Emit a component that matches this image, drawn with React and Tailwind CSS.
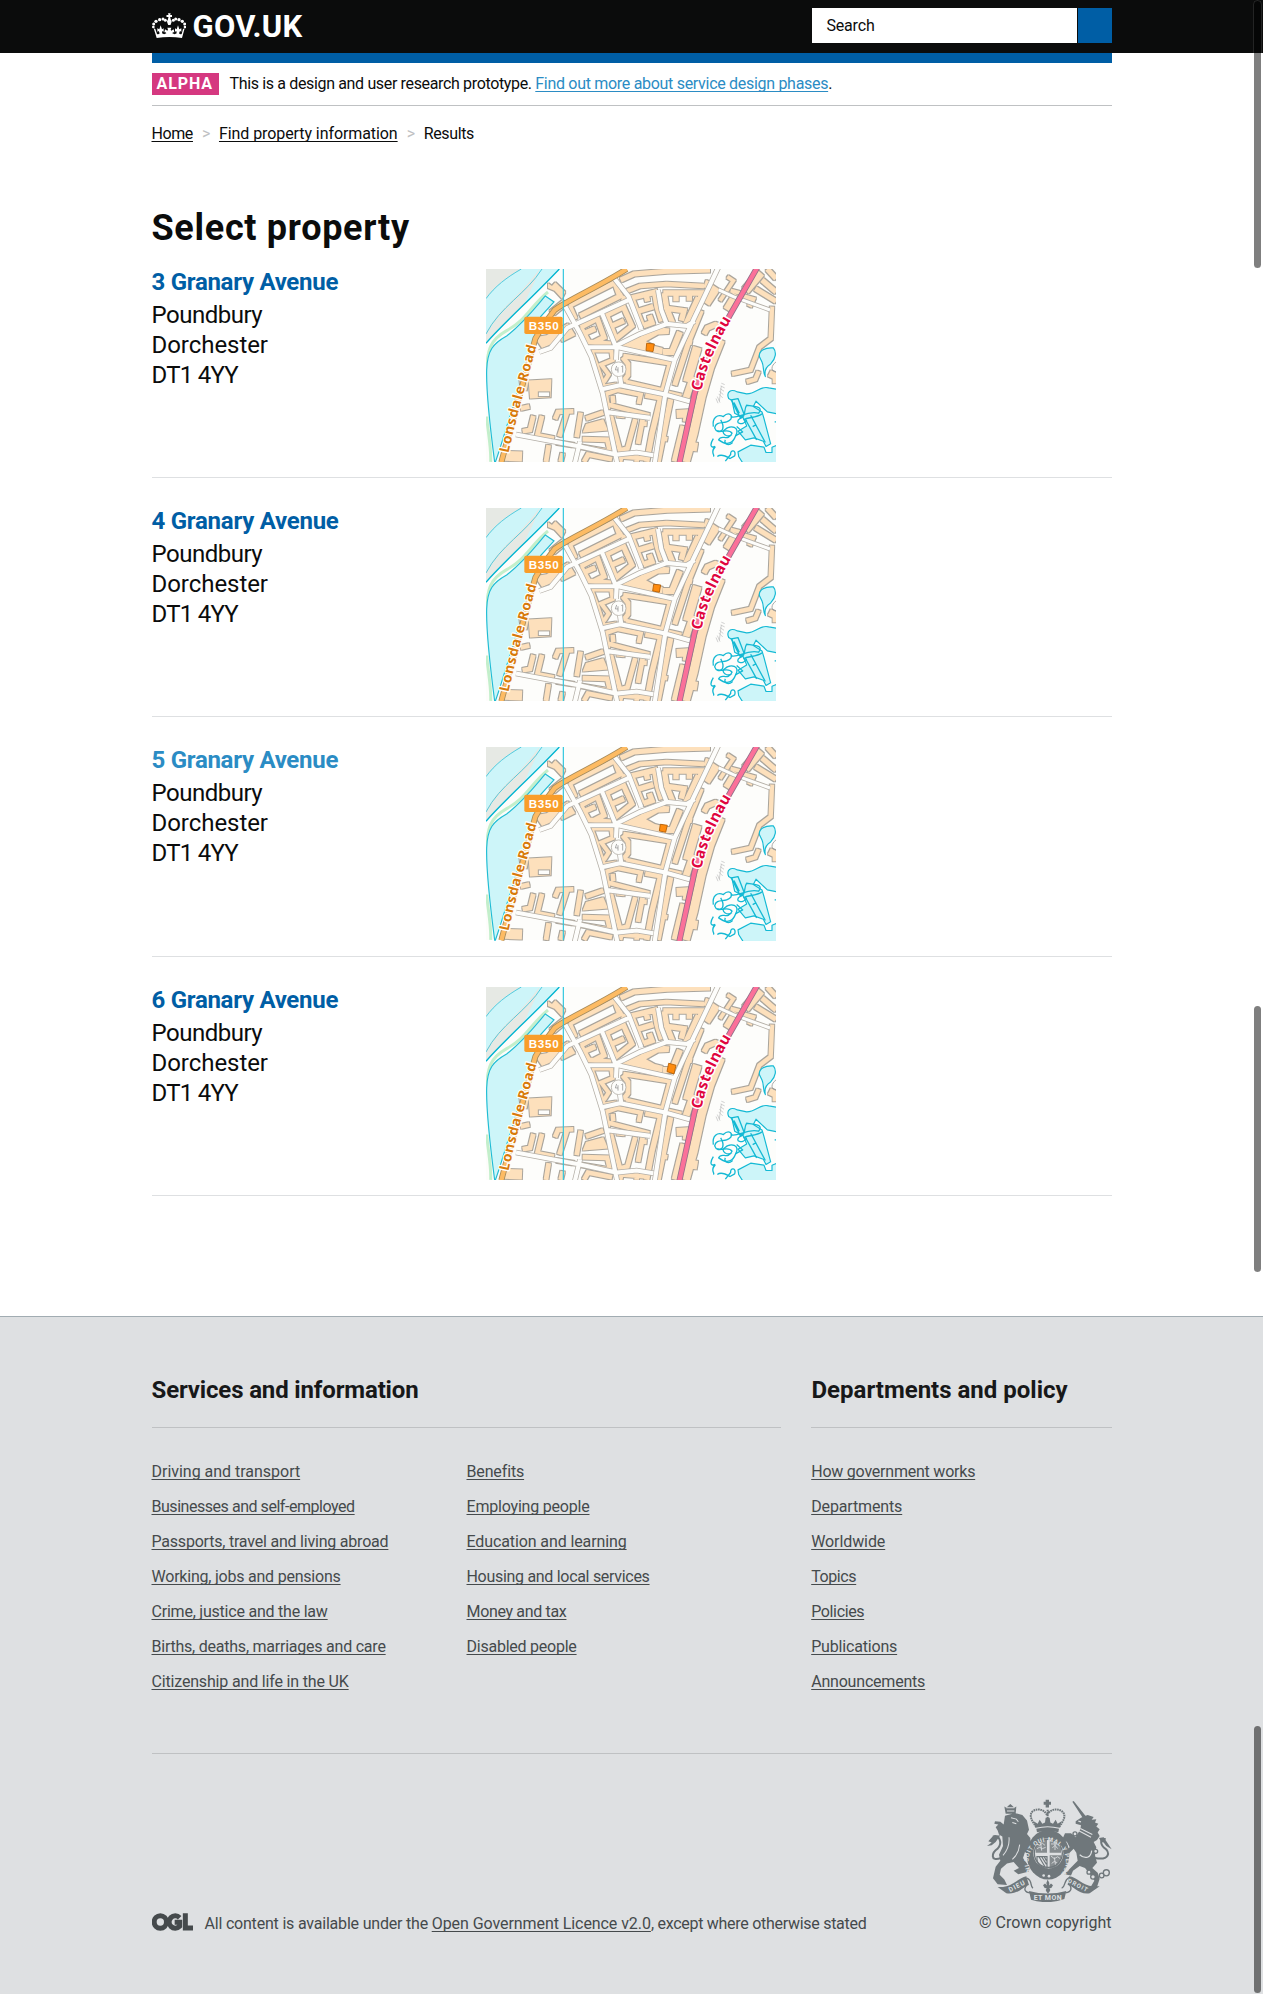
const ROBOTO = "font-['Roboto','Liberation_Sans',sans-serif]";

const properties = [
  { n: "3", marker: "M500 250 L523 252 L519 275 L498 272Z", tone: "text-[#005ea5]", track: "tracking-[-0.28px]" },
  { n: "4", marker: "M521 256 L542 258 L538 280 L518 276Z", tone: "text-[#005ea5]", track: "tracking-[-0.25px]" },
  { n: "5", marker: "M541 259 L562 262 L557 283 L538 279Z", tone: "text-[#2b8cc4]", track: "tracking-[-0.28px]" },
  { n: "6", marker: "M566 256 L588 262 L582 288 L561 281Z", tone: "text-[#005ea5]", track: "tracking-[-0.28px]" },
];

const servicesA = [
  ["Driving and transport", "tracking-[-0.02px]"],
  ["Businesses and self-employed", "tracking-[-0.46px]"],
  ["Passports, travel and living abroad", "tracking-[-0.21px]"],
  ["Working, jobs and pensions", "tracking-[-0.22px]"],
  ["Crime, justice and the law", "tracking-[-0.22px]"],
  ["Births, deaths, marriages and care", "tracking-[-0.23px]"],
  ["Citizenship and life in the UK", "tracking-[-0.17px]"],
];
const servicesB = [
  ["Benefits", "tracking-[-0.14px]"],
  ["Employing people", "tracking-[-0.2px]"],
  ["Education and learning", "tracking-[-0.11px]"],
  ["Housing and local services", "tracking-[-0.3px]"],
  ["Money and tax", "tracking-[-0.33px]"],
  ["Disabled people", "tracking-[-0.24px]"],
];
const departments = [
  ["How government works", "tracking-[-0.22px]"],
  ["Departments", "tracking-[-0.14px]"],
  ["Worldwide", "tracking-[-0.09px]"],
  ["Topics", "tracking-[-0.4px]"],
  ["Policies", "tracking-[-0.36px]"],
  ["Publications", "tracking-[-0.18px]"],
  ["Announcements", "tracking-[-0.2px]"],
];

const underline = "underline decoration-1 underline-offset-[2px] [text-decoration-skip-ink:none]";

/* Land parcels: [stroke width, path] */
const strips = [
  [15, "M268 136 L286 178 M268 137 L404 68 L418 106 M300 168 L428 104"],
  [15, "M422 60 L462 42 L560 34 L690 30 M540 34 V40"],
  [13, "M440 94 L480 78 L560 72 L672 78 M684 62 L676 84"],
  [16, "M488 198 L455 114 L524 97 L531 140 L545 184 M474 154 L520 140 M490 197 L516 188 L508 166 M498 104 L503 124"],
  [16, "M550 99 L665 99 L655 140 M588 99 V124 M628 99 V122 M553 99 L560 145 L578 190 M566 146 L612 152 L604 182 M655 112 L616 196"],
  [15, "M434 108 L428 136 L456 198 L408 236 L380 166 L424 144 M396 198 L432 182 M428 136 L442 168"],
  [15, "M302 202 L352 176 L372 232 L344 246 M302 202 L326 246 L394 252 M318 218 L346 206"],
  [18, "M548 276 L576 276 L600 216"],
  [14, "M430 288 L570 310 L548 392 L438 366 M428 292 L444 312 L444 346 L430 364"],
  [12, "M336 272 L394 272 L398 300 L364 314 L386 344 L372 366 M334 272 L352 320 L372 380 L410 374"],
  [13, "M384 448 L378 402 L412 390 L482 404 L476 432 M384 434 L508 466 M398 408 L400 430"],
  [16, "M496 406 L542 414 L516 520 L500 606 M572 418 L534 606"],
  [14, "M552 396 L604 408 M562 538 L540 534"],
  [14, "M392 466 L420 572 L442 566 L466 478 M410 466 L434 468 M488 478 L474 552 M480 490 L500 492"],
  [14, "M160 468 L150 510 L128 514 M186 468 L172 526 L222 536 M262 455 L238 530 M225 478 L234 456 L280 454 M302 458 L290 532 M318 476 L370 458"],
  [14, "M308 538 L382 540 L390 576 L296 560 M206 556 L198 606 M248 580 L242 606 M230 548 L282 556 M312 606 L324 584 L396 598 M420 606 L424 590 L500 596 M470 580 V606"],
  [30, "M72 588 L126 590"],
  [14, "M122 446 L148 440"],
  [15, "M664 152 L626 246 L584 376 M626 246 L636 248"],
  [16, "M672 222 L682 204 L706 194 L734 204"],
  [34, "M674 128 L706 80 "],
  [26, "M742 150 L770 104"],
  [11, "M720 122 L760 62 L742 50 M752 92 L784 100"],
  [26, "M796 92 L842 38"],
  [15, "M826 86 L888 124 M846 60 L888 96 M862 27 L888 56 M790 110 L818 118 L808 140"],
  [13, "M876 140 L872 236 L838 262 L812 330 L756 342 M800 366 L826 358 L836 334"],
  [26, "M722 240 L690 320 L664 410 L640 520 L616 606 M690 320 L672 370 M640 560 L652 562"],
  [24, "M696 250 L724 258"],
  [26, "M652 262 L622 366"],
  [30, "M616 500 L590 606"],
  [24, "M590 462 L624 460 L620 486"],
  [20, "M868 340 L888 350 V370 M640 350 L616 420"],
];

const parcels =
  "M426 256 L480 226 L540 203 L568 206 L566 222 L534 224 L498 244 L524 258 L548 264 L546 284 L424 262Z " +
  "M204 70 L216 78 L226 67 L256 96 L246 116 L224 92 L204 84Z M146 362 L214 358 L212 412 L150 416Z " +
  "M164 232 L200 226 L264 190 L286 226 L246 246 L238 224 L214 252 L186 264Z M318 492 L370 478 L384 512 L308 518Z " +
  "M208 152 L248 120 L262 134 L224 166Z M118 356 L146 360 L140 392 L122 388Z";

const streets =
  "M254 136 L300 220 L334 290 L368 400 L412 612 M178 276 L212 264 L262 204 L450 118 " +
  "M322 262 L414 262 L584 300 M400 52 L446 110 L484 208 M410 256 L480 222 L560 192 L620 198 L644 184 M716 20 L640 180 L584 300 L556 402 L524 612 " +
  "M366 388 L420 376 L556 404 L636 426 M376 456 L510 474 M108 524 L300 560 L410 584 L470 578 L520 586 M366 160 L408 262 " +
  "M534 90 L544 150 L560 192 M410 262 L408 300 M420 350 L424 378 M300 545 L284 612";

function PropertyMap({ marker }) {
  return (
    <svg className="block h-[193.2px] w-[290px]" viewBox="18 27 870 580" preserveAspectRatio="none">
      <defs>
        <filter id="parcel-outline" filterUnits="userSpaceOnUse" x="0" y="0" width="910" height="640">
          <feMorphology in="SourceAlpha" operator="dilate" radius="3" result="grown" />
          <feFlood floodColor="#aaa59c" />
          <feComposite in2="grown" operator="in" />
          <feMerge>
            <feMergeNode />
            <feMergeNode in="SourceGraphic" />
          </feMerge>
        </filter>
        <path id="lonsdale" d="M86 580 C104 490 140 370 172 250" />
        <path id="castelnau" d="M664 394 C676 330 704 262 756 176" />
      </defs>
      <rect x="18" y="27" width="870" height="580" fill="#fdfdfb" />
      <path d="M18 27 H238 C150 120 70 190 18 250Z" fill="#e6e9e4" />
      <path d="M124 27 C80 52 44 80 18 116 V218 C60 140 120 110 178 27Z" fill="#cdf5f9" />
      <path d="M178 27 H238 C200 66 166 100 134 130 C150 90 170 60 178 27Z" fill="#cdf5f9" />
      <path d="M124 27 C80 52 44 80 18 116 M186 27 C140 100 60 140 18 222" fill="none" stroke="#35c3da" strokeWidth="2.5" />
      <path d="M238 27 C150 120 70 190 18 250" fill="none" stroke="#00b4d0" strokeWidth="4" />
      <path d="M204 96 C150 140 140 180 80 212 C30 240 22 270 20 330 M20 470 C24 520 34 560 32 606" fill="none" stroke="#c3efcb" strokeWidth="9" />
      <path d="M44 607 C30 500 18 400 20 330 C22 270 40 250 80 228 C130 190 160 150 196 108 L222 126 L182 170 C160 250 110 400 80 500 C62 560 52 590 46 607Z" fill="#cdf5f9" stroke="#1fbcd4" strokeWidth="3.5" />
      <g filter="url(#parcel-outline)" stroke="#fde0bc" fill="none">
        {strips.map(([w, d]) => (
          <path key={d} d={d} strokeWidth={w} />
        ))}
        <path d={parcels} fill="#fde0bc" stroke="none" />
      </g>
      <rect x="175" y="396" width="34" height="14" fill="#fdfdfb" stroke="#aaa59c" strokeWidth="3" />
      <path d={streets} fill="none" stroke="#b3aea6" strokeWidth="17" />
      <path d="M716 90 L760 110 L870 150" fill="none" stroke="#b3aea6" strokeWidth="14" />
      <circle cx="416" cy="328" r="22" fill="#fdfdfb" stroke="#b3aea6" strokeWidth="2.5" />
      <path d={streets} fill="none" stroke="#fdfdfb" strokeWidth="12.5" />
      <path d="M716 90 L760 110 L870 150" fill="none" stroke="#fdfdfb" strokeWidth="9" />
      <path d="M410 318 L406 330 H414 M414 322 V338 M424 320 L428 318 V338" fill="none" stroke="#999" strokeWidth="2.5" />
      <path d="M64 607 L82 540 L166 236 L190 196 L224 150 C270 116 350 84 440 27" fill="none" stroke="#a58b5c" strokeWidth="18" />
      <path d="M64 607 L82 540 L166 236 L190 196 L224 150 C270 116 350 84 440 27" fill="none" stroke="#fdbb63" strokeWidth="13" />
      <path d="M598 610 L644 400 L680 290 L750 165 L832 22" fill="none" stroke="#94708a" strokeWidth="18" />
      <path d="M598 610 L644 400 L680 290 L750 165 L832 22" fill="none" stroke="#fb7099" strokeWidth="13" />
      <path d="M250 27 V607" stroke="#2cc6dd" strokeWidth="3.5" />
      <g fill="#cdf5f9" stroke="#14b9d4" strokeWidth="3.5" strokeLinejoin="round">
        <path d="M746 416 C738 396 752 386 772 396 L800 402 C830 402 840 376 866 384 L892 388 V462 L862 456 L828 424 L820 440 L846 456 L852 476 L872 552 L858 560 L850 544 L822 534 L796 540 L774 514 L800 498 L790 474 L764 460 L756 422Z" />
        <path d="M774 576 L812 556 L852 562 L858 578 H876 V562 L892 556 V612 H790 L776 590Z" />
        <path d="M838 290 C836 272 856 262 880 264 C890 276 888 296 872 312 C858 320 852 330 856 350 C848 336 852 318 846 306Z" />
        <path d="M884 486 H892" />
      </g>
      <g fill="none" stroke="#14b9d4" strokeWidth="4" strokeLinejoin="round">
        <path d="M700 500 C696 474 712 462 730 470 C748 452 764 470 748 482 C734 494 708 480 704 504 C712 530 744 500 756 520 C744 548 724 520 716 540 C742 560 760 548 766 530 C784 500 750 494 734 510 C720 518 742 536 756 524" />
        <path d="M754 420 L780 472 L792 462 L774 416Z M762 428 L778 460 M752 470 C770 480 800 450 836 460 C850 440 830 440 800 436 C790 450 800 470 780 476 C760 490 790 500 800 480" />
        <path d="M796 478 L830 540 M812 466 L856 548 M818 500 L826 496 M700 536 C690 552 690 566 704 560 C690 580 706 586 700 590 M706 560 L698 572 M712 590 C724 580 740 590 750 596 L764 588 C770 570 750 568 752 584 L736 604" />
        <path d="M722 480 C734 500 730 520 712 512 M736 540 C730 552 744 560 758 548 M770 500 L788 516 L766 528 M846 462 C826 476 806 470 790 480" />
      </g>
      <path d="M724 370 L734 374 M722 378 L734 384 M720 386 L732 394 M718 394 L730 404 M716 402 L728 414 M712 410 L720 428 M708 416 L714 430 M724 378 L718 424" fill="none" stroke="#b9b9b9" strokeWidth="2" />
      <path d="M888 306 C872 318 872 334 888 336" fill="none" stroke="#999" strokeWidth="2.5" />
      <path d={marker} fill="#ff8c0f" stroke="#b05a00" strokeWidth="2.5" />
      <rect x="133" y="170" width="115" height="52" rx="5" fill="#f99d2a" />
      <text x="191" y="209" textAnchor="middle" fill="#fff" fontFamily="Liberation Sans, sans-serif" fontWeight="700" fontSize="35" textLength="90">B350</text>
      <text fill="#d87a0a" stroke="#fffdf8" strokeWidth="8" strokeLinejoin="round" paintOrder="stroke" fontFamily="Noto Sans, sans-serif" fontWeight="700" fontSize="41">
        <textPath href="#lonsdale" textLength="332">Lonsdale Road</textPath>
      </text>
      <text fill="#e0063f" stroke="#fff" strokeWidth="9" strokeLinejoin="round" paintOrder="stroke" fontFamily="Noto Sans, sans-serif" fontWeight="700" fontSize="45">
        <textPath href="#castelnau" textLength="234">Castelnau</textPath>
      </text>
    </svg>
  );
}

function Crown() {
  return (
    <svg className="mt-[13px] h-[26px] w-[34px]" viewBox="36 38 102 78" fill="#fff">
      <path d="M84 39 h8 l-1.500 5 h5.500 v6 h-5.500 l2 8 a7 7 0 0 1 2 8 l-3 8 h-7 l-3 -8 a7 7 0 0 1 2 -8 l2 -8 h-6 v-6 h6Z" />
      <g>
        <circle cx="76" cy="60" r="4.500" /><circle cx="69" cy="56" r="4.500" /><circle cx="59" cy="58" r="5" />
        <circle cx="48" cy="63" r="5" /><circle cx="41" cy="71" r="4.500" /><circle cx="40" cy="80" r="4" />
        <circle cx="100" cy="60" r="4.500" /><circle cx="107" cy="56" r="4.500" /><circle cx="117" cy="58" r="5" />
        <circle cx="127" cy="63" r="5" /><circle cx="134" cy="71" r="4.500" /><circle cx="135" cy="80" r="4" />
      </g>
      <path d="M41 84 L50 113 Q88 107 126 113 L134 84 L129 86 L125 101 Q120 103 117 99 L120 92 L124 94 V84 L118 87 L114 75 L110 87 L105 84 V94 L109 92 L110 99 Q104 104 97 99 Q98 94 103 96 L101 87 L94 91 L92 88 L94 82 H82 L84 88 L82 91 L75 87 L73 96 Q78 94 79 99 Q72 104 66 99 L67 92 L71 94 V84 L66 87 L62 75 L58 87 L52 84 V94 L56 92 L59 99 Q56 103 51 101 L46 86Z" />
    </svg>
  );
}

function RoyalArms() {
  const ink = "#6f777b";
  const paper = "#dee0e2";
  return (
    <svg className="block h-[103px] w-[125px]" viewBox="52 56 375 307" preserveAspectRatio="none">
      <defs>
        <path id="garter" d="M203 290 A56 58 0 1 1 270 284" />
      </defs>
      {/* lion */}
      <path fill={ink} d="M104 78 l6 4 6 -6 6 -5 6 5 6 6 6 -4 -2 22 h-30Z M106 106 L136 98 L158 104 L172 120 L178 148 L172 160 L182 172 L184 204 L176 222 L166 214 L160 232 L180 260 L178 272 L146 280 L132 270 L148 262 L132 244 L112 248 L94 264 L90 282 L104 296 L112 312 L84 310 L70 292 L78 258 L92 240 L88 222 L100 196 L98 168 L88 162 L84 150 L78 140 L86 132 L74 130 L76 122 L92 124 L102 132Z" />
      <path d="M94 232 C60 244 66 216 84 204 C100 186 88 160 70 168" fill="none" stroke={ink} strokeWidth="6" />
      <path fill={ink} d="M52 196 L66 186 L56 182 L70 166 L92 164 L78 184 L66 194Z" />
      <path d="M124 112 L140 116 L146 124 M128 126 l12 4 M110 82 l24 0 M112 92 h22 M100 224 C112 210 120 190 118 170 M128 236 C140 226 148 210 150 192" fill="none" stroke={paper} strokeWidth="3" />
      {/* unicorn */}
      <path fill={ink} d="M308 64 L312 62 L352 112 L342 116Z M342 108 L354 104 L372 110 L366 118 L380 116 L376 126 L386 130 L380 138 L390 146 L384 156 L390 166 L382 178 L372 184 L380 200 L376 224 L382 246 L368 262 L384 276 L390 294 L382 318 L362 320 L374 300 L366 286 L346 262 L330 256 L310 270 L304 284 L284 280 L296 268 L324 240 L320 216 L312 204 L296 220 L286 212 L300 200 L292 184 L278 176 L286 158 L304 158 L318 170 L332 146 L334 134 L318 130 L318 122 L334 112Z" />
      <path d="M376 232 C420 240 424 214 402 200 C388 184 396 172 408 176" fill="none" stroke={ink} strokeWidth="6" />
      <path fill={ink} d="M388 172 L402 170 L426 206 L410 196 L402 186 L394 184Z" />
      <path d="M326 150 L364 170 M332 144 L368 162 M330 222 C346 236 364 232 366 210 M326 122 l8 2" fill="none" stroke={paper} strokeWidth="3.500" />
      <g fill={paper} stroke={ink} strokeWidth="4">
        <circle cx="316" cy="160" r="6" /><circle cx="378" cy="212" r="6" /><circle cx="358" cy="274" r="6" />
        <circle cx="370" cy="288" r="7" /><circle cx="396" cy="284" r="7" /><circle cx="410" cy="276" r="9" />
      </g>
      {/* crown */}
      <path fill={ink} d="M228 58 h10 v6 h6 v9 h-6 v8 h-10 v-8 h-6 v-9 h6Z" />
      <path d="M200 140 C186 120 176 104 190 92 C206 82 224 88 232 104 C240 88 260 82 276 92 C292 104 282 120 268 140 M234 88 V130" fill="none" stroke={ink} strokeWidth="6" strokeDasharray="5 2" />
      <path fill={ink} d="M198 142 L192 122 L204 130 L210 118 L218 130 L226 126 L228 112 H240 L242 126 L250 130 L258 118 L264 130 L276 122 L270 142 Q234 132 198 142Z M200 145 Q234 136 268 145 L266 155 Q234 146 202 155Z" />
      {/* garter and shield */}
      <ellipse cx="235" cy="222" rx="64" ry="74" fill={ink} />
      <circle cx="236" cy="218" r="45" fill={paper} />
      <path d="M198 216 V184 L214 176 H232 V216Z M240 176 H258 L274 188 V216 H240Z M240 224 H276 L270 246 L256 260 L240 264Z" fill={ink} opacity=".8" />
      <g fill="none" stroke={paper} strokeWidth="2.500">
        <path d="M202 190 l8 4 8 -6 8 6 M202 204 l8 -4 8 4 10 -4 M244 226 l10 8 10 -6 8 6 M246 248 l8 -6 10 6 M244 190 h24 M248 202 l8 -8 8 10 M212 180 l4 30 M256 182 v26 M254 230 l4 26" />
      </g>
      <path d="M202 228 C200 250 214 262 230 262 M208 228 L226 258 M216 228 L230 250 M224 228 L230 240 M200 228 H232 V264" fill="none" stroke={ink} strokeWidth="3.500" />
      <circle cx="236" cy="218" r="42" fill="none" stroke={ink} strokeWidth="4" />
      <text fill={paper} fontFamily="Roboto, sans-serif" fontWeight="700" fontSize="18">
        <textPath href="#garter" textLength="278">HONI SOIT QUI MAL Y PENSE</textPath>
      </text>
      <circle cx="222" cy="284" r="4" fill={paper} /><circle cx="238" cy="286" r="4" fill={paper} />
      {/* scroll */}
      <path d="M172 292 C190 300 180 316 190 322 M276 322 C290 316 280 300 298 290 M172 312 C160 326 166 334 182 336 M288 336 C306 332 308 322 298 308" fill="none" stroke={ink} strokeWidth="4" />
      <path fill={ink} d="M84 318 L110 337 C146 342 160 316 178 312 L170 286 C150 288 134 314 100 318Z M178 330 Q234 346 290 330 L284 354 Q234 372 184 356Z M294 312 C312 314 326 342 360 337 L390 316 L370 316 C338 314 322 288 298 286Z" />
      <path fill={ink} d="M234 296 l5 10 -1 8 6 -6 6 5 -5 8 -6 1 3 5 -3 6 -4 5 -4 -5 -3 -6 3 -5 -6 -1 -5 -8 6 -5 6 6 -2 -8Z" />
      <g fill={paper} fontFamily="Roboto, sans-serif" fontWeight="700" fontSize="20">
        <text transform="translate(121 334) rotate(-27)" textLength="52">DIEU</text>
        <text x="192" y="358" textLength="84" fontSize="21">ET MON</text>
        <text transform="translate(293 304) rotate(27)" textLength="64" fontSize="18">DROIT</text>
      </g>
    </svg>
  );
}

function LinkList({ items, className }) {
  return (
    <ul className={className}>
      {items.map(([label, track]) => (
        <li key={label} className="h-[35px] leading-5">
          <a href="#" className={`${underline} ${track}`}>{label}</a>
        </li>
      ))}
    </ul>
  );
}

export default function App() {
  return (
    <div className={`relative flex h-[1994px] w-[1263px] flex-col overflow-hidden bg-white text-base leading-5 text-[#0b0c0c] ${ROBOTO}`}>
      <header className="h-[53px] bg-[#0b0c0c]">
        <div className="mx-auto flex w-[960px] justify-between">
          <a href="#" className="flex gap-[7px] text-white">
            <Crown />
            <span className="mt-[6px] text-[31px] leading-[42px] font-bold tracking-[0.3px]">GOV.UK</span>
          </a>
          <form className="mt-2 flex gap-px">
            <div className="h-[35px] w-[265px] bg-white pt-[8px] pl-[15px] leading-5 tracking-[-0.19px]">Search</div>
            <div className="h-[35px] w-[34px] bg-[#005ea5]" />
          </form>
        </div>
      </header>

      <main className="mx-auto w-[960px]">
        <div className="h-[10px] bg-[#005ea5]" />
        <div className="flex h-[43px] items-start border-b border-[#bfc1c3] pt-[10px]">
          <strong className="mr-[11px] h-[22px] w-[67px] bg-[#d53880] pl-[5px] leading-[21px] tracking-[0.9px] text-white">ALPHA</strong>
          <p className="pt-px leading-5">
            <span className="tracking-[-0.35px]">This is a design and user research prototype. </span>
            <a href="#" className={`${underline} tracking-[-0.3px] text-[#2b8cc4]`}>Find out more about service design phases</a>.
          </p>
        </div>

        <nav className="mt-[18px] flex h-5 leading-5">
          <a href="#" className={`${underline} tracking-[-0.4px]`}>Home</a>
          <span className="w-[26px] pl-[9px] text-[#bfc1c3]">&gt;</span>
          <a href="#" className={`${underline} tracking-[-0.08px]`}>Find property information</a>
          <span className="w-[26px] pl-[9px] text-[#bfc1c3]">&gt;</span>
          <span className="tracking-[-0.35px]">Results</span>
        </nav>

        <h1 className="mt-[64px] h-[61px] text-[36px] leading-10 font-bold tracking-[0.7px]">Select property</h1>

        <ul>
          {properties.map((p) => (
            <li key={p.n} className="mb-[30px] flex border-b border-[#dee0e2] pb-[15px]">
              <div className="-mt-[2px] w-[334px] text-2xl leading-[30px]">
                <h2 className={`mb-[3px] font-bold ${p.tone} ${p.track}`}>{p.n} Granary Avenue</h2>
                <p className="tracking-[-0.5px]">Poundbury</p>
                <p className="tracking-[-0.05px]">Dorchester</p>
                <p className="tracking-[-0.75px]">DT1 4YY</p>
              </div>
              <PropertyMap marker={p.marker} />
            </li>
          ))}
        </ul>
      </main>

      <footer className="mt-[90.5px] flex-1 border-t border-[#a1acb2] bg-[#dee0e2] text-[#454a4c]">
        <div className="mx-auto w-[960px]">
          <div className="flex gap-[30px] pt-[55px]">
            <section className="w-[629px]">
              <h2 className="h-[56px] border-b border-[#bfc1c3] text-2xl leading-[36px] font-bold tracking-[-0.15px] text-[#171819]">Services and information</h2>
              <div className="flex pt-[34px]">
                <LinkList className="w-[315px]" items={servicesA} />
                <LinkList items={servicesB} />
              </div>
            </section>
            <section className="w-[301px]">
              <h2 className="h-[56px] border-b border-[#bfc1c3] pl-px text-2xl leading-[36px] font-bold text-[#171819]">Departments and policy</h2>
              <LinkList className="pt-[34px] pl-[0.7px]" items={departments} />
            </section>
          </div>
          <div className="mt-[46px] flex items-end justify-between border-t border-[#bfc1c3] pt-[45px]">
            <div className="flex">
              <svg className="mr-3 h-[18px] w-[41px]" viewBox="0 0 123 54" fill="none" stroke="#454a4c" strokeWidth="15">
                <circle cx="25" cy="27" r="18.500" />
                <path d="M83 14 A18.500 18.500 0 1 0 83 40 V28 H68 M100 1 V45 H123" />
              </svg>
              <p className="relative top-px">
                <span className="tracking-[-0.2px]">All content is available under the </span>
                <a href="#" className={`${underline} tracking-[-0.07px]`}>Open Government Licence v2.0</a>
                <span className="tracking-[-0.28px]">, except where otherwise stated</span>
              </p>
            </div>
            <div className="flex flex-col items-end">
              <RoyalArms />
              <p className="mt-[11px]">© Crown copyright</p>
            </div>
          </div>
        </div>
      </footer>

      <div className="absolute top-px left-[1254px] h-[267px] w-[7px] rounded-full bg-black/50 outline outline-white/10" />
      <div className="absolute top-[1006px] left-[1254px] h-[266px] w-[7px] rounded-full bg-black/50" />
      <div className="absolute top-[1726px] left-[1254px] h-[267px] w-[7px] rounded-full bg-black/50" />
    </div>
  );
}
